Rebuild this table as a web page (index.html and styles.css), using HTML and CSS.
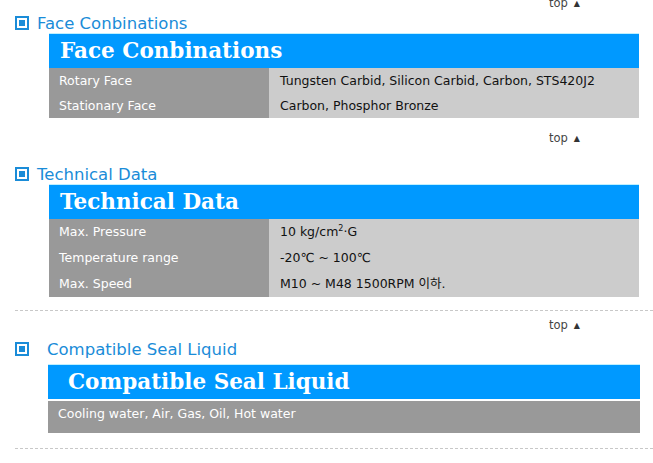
FILE: index.html
```html
<!DOCTYPE html>
<html>
<head>
<meta charset="utf-8">
<link rel="stylesheet" href="styles.css">
</head>
<body>
<div class="page">
  <div class="toplink first"><span>top</span><span class="tri">▲</span></div>
  <div class="heading h1"><span class="icon"><span></span></span><span class="htext">Face Conbinations</span></div>
  <div class="spec s1">
    <div class="banner">Face Conbinations</div>
    <div class="row"><div class="label">Rotary Face</div><div class="value">Tungsten Carbid, Silicon Carbid, Carbon, STS420J2</div></div>
    <div class="row"><div class="label">Stationary Face</div><div class="value">Carbon, Phosphor Bronze</div></div>
  </div>

  <div class="toplink second"><span>top</span><span class="tri">▲</span></div>
  <div class="heading h2"><span class="icon"><span></span></span><span class="htext">Technical Data</span></div>
  <div class="spec s2">
    <div class="banner">Technical Data</div>
    <div class="row"><div class="label">Max. Pressure</div><div class="value">10 kg/cm<sup>2</sup>·G</div></div>
    <div class="row"><div class="label">Temperature range</div><div class="value">-20℃ ~ 100℃</div></div>
    <div class="row"><div class="label">Max. Speed</div><div class="value">M10 ~ M48 1500RPM 이하.</div></div>
  </div>

  <div class="dash d1"></div>
  <div class="toplink third"><span>top</span><span class="tri">▲</span></div>
  <div class="heading h3"><span class="icon"><span></span></span><span class="htext wide">Compatible Seal Liquid</span></div>
  <div class="spec s3">
    <div class="banner">Compatible Seal Liquid</div>
    <div class="single">Cooling water, Air, Gas, Oil, Hot water</div>
  </div>
  <div class="dash d2"></div>
</div>
</body>
</html>
```
FILE: styles.css
```css
html, body {
  margin: 0;
  padding: 0;
  background: #fff;
}
body {
  font-family: "DejaVu Sans", "Noto Sans CJK KR", sans-serif;
  font-size: 12.5px;
  color: #222;
}
.page {
  width: 653px;
  overflow: hidden;
}
.toplink {
  display: flex;
  justify-content: flex-end;
  align-items: center;
  gap: 6px;
  height: 14px;
  padding-right: 73px;
  font-size: 11.5px;
  color: #444;
  font-family: "DejaVu Sans", sans-serif;
}
.toplink .tri {
  font-size: 8px;
  color: #333;
}
.toplink.first { margin-top: -4px; }
.toplink.second { margin-top: 13px; }
.toplink.third { margin-top: 7px; }

.heading {
  display: flex;
  align-items: center;
  height: 16px;
  padding-left: 15px;
  color: #1a8cd8;
  font-size: 16.5px;
  font-family: "DejaVu Sans", sans-serif;
}
.h1 { margin-top: 5px; }
.h2 { margin-top: 21px; }
.h3 { margin-top: 9px; }
.icon {
  width: 14px;
  height: 14px;
  box-sizing: border-box;
  border: 2px solid #1a8cd8;
  display: flex;
  align-items: center;
  justify-content: center;
  margin-right: 8px;
}
.icon span {
  width: 6px;
  height: 6px;
  background: #1a8cd8;
}
.htext.wide { margin-left: 10px; }

.spec {
  margin-left: 49px;
  width: 590px;
}
.s1 { margin-top: 2px; }
.s2 { margin-top: 2px; }
.s3 { margin-top: 7px; margin-left: 48px; width: 592px; }

.banner {
  height: 34px;
  border-top: 1px solid #bff0ff;
  background: #0099ff;
  color: #fff;
  font-family: "DejaVu Serif", "Liberation Serif", serif;
  font-weight: bold;
  font-size: 21.5px;
  line-height: 34px;
  padding-left: 11px;
}
.s3 .banner { padding-left: 20px; }

.row {
  display: flex;
  height: 25px;
  line-height: 25px;
}
.s2 .row { height: 26px; line-height: 26px; }
.label {
  width: 210px;
  padding-left: 10px;
  background: #999;
  color: #fff;
}
.value {
  flex: 1;
  padding-left: 11px;
  background: #ccc;
  color: #111;
}
.value sup {
  font-size: 8px;
  line-height: 0;
  vertical-align: 5px;
}
.single {
  margin-top: 2px;
  height: 32px;
  line-height: 26px;
  padding-left: 10px;
  background: #999;
  color: #fff;
}
.dash {
  border-top: 1px dashed #c8c8c8;
  margin-left: 15px;
}
.d1 { margin-top: 13px; }
.d2 { margin-top: 15px; }
```
